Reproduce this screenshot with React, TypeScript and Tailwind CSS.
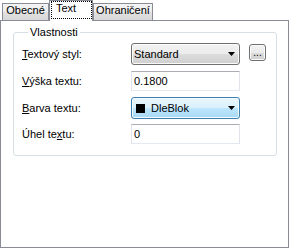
import React from "react";

function Arrow() {
  return (
    <svg width="7" height="4" viewBox="0 0 7 4" className="shrink-0">
      <polygon points="0,0 7,0 3.5,4" fill="#000" />
    </svg>
  );
}

export default function App() {
  const inactiveTab =
    "h-[17px] border border-b-0 border-[#898c95] bg-[linear-gradient(#f4f4f4,#ececec_50%,#e0e0e0_50%,#d8d8d8)] flex items-start justify-center";
  return (
    <div className="w-[291px] h-[250px] bg-white font-['Liberation_Sans',Arial,sans-serif] text-[11px] leading-[13px] text-black overflow-hidden">
      <div className="flex items-end h-[20px] pl-[2px]">
        <div className={"w-[47px] " + inactiveTab}>Obecné</div>
        <div className="relative z-10 w-[44px] h-[21px] -mb-[1px] border border-b-0 border-[#898c95] bg-white pl-[1px]">
          <div className="h-[18px] border border-dotted border-black pl-[4px]">Text</div>
        </div>
        <div className={"w-[60px] " + inactiveTab}>Ohraničení</div>
      </div>
      <div className="w-[289px] h-[228px] border border-[#898c95] bg-white pl-[12px]">
        <fieldset className="mt-[5px] w-[264px] border border-[#d5dfe5] rounded-[3px] pl-[8px] pt-[4px] pb-[11px]">
          <legend className="ml-[6px] px-[2px] leading-[13px]">Vlastnosti</legend>
          <div className="flex flex-col">
            <div className="flex items-start">
              <div className="w-[109px] h-[22px] flex items-center">
                <span>
                  <u>T</u>extový styl:
                </span>
              </div>
              <div className="w-[109px] h-[22px] border border-[#707070] rounded-[3px] bg-[linear-gradient(#f2f2f2,#ebebeb_50%,#dddddd_50%,#cfcfcf)] shadow-[inset_0_0_0_1px_#fbfbfb] flex items-center pl-[2px] pr-[4px]">
                <span className="flex-1">Standard</span>
                <Arrow />
              </div>
              <div className="ml-[9px] mt-[1px] w-[17px] h-[17px] border border-[#707070] rounded-[3px] bg-[linear-gradient(#f2f2f2,#ebebeb_50%,#dddddd_50%,#cfcfcf)] shadow-[inset_0_0_0_1px_#fbfbfb] flex items-end justify-center pb-[2px] text-[10px] leading-[10px]">
                ...
              </div>
            </div>
            <div className="flex items-center mt-[6px]">
              <div className="w-[109px]">
                <u>V</u>ýška textu:
              </div>
              <div className="w-[109px] h-[20px] border border-[#e2e3ea] border-t-[#abadb3] border-b-[#e3e9ef] flex items-center pl-[2px]">
                0.1800
              </div>
            </div>
            <div className="flex items-center mt-[6px]">
              <div className="w-[109px]">
                <u>B</u>arva textu:
              </div>
              <div className="w-[109px] h-[22px] border border-[#3c7fb1] rounded-[3px] bg-[linear-gradient(#eaf6fd,#d9f0fc_50%,#bee6fd_50%,#a7d9f5)] shadow-[inset_0_0_0_1px_#f4fbfe] flex items-center pl-[4px] pr-[4px]">
                <span className="w-[9px] h-[9px] bg-black shrink-0" />
                <span className="flex-1 ml-[6px]">DleBlok</span>
                <Arrow />
              </div>
            </div>
            <div className="flex items-center mt-[5px]">
              <div className="w-[109px]">
                Úhel te<u>x</u>tu:
              </div>
              <div className="w-[109px] h-[20px] border border-[#e2e3ea] border-t-[#abadb3] border-b-[#e3e9ef] flex items-center pl-[2px]">
                0
              </div>
            </div>
          </div>
        </fieldset>
      </div>
    </div>
  );
}
